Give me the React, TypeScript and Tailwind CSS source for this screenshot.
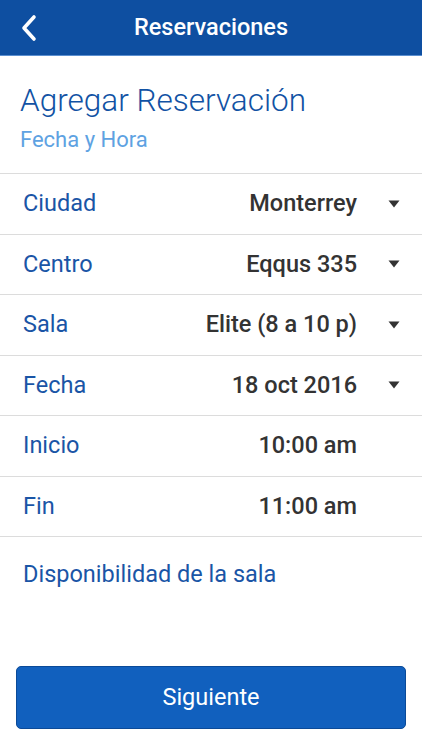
const rows = [
  { label: "Ciudad", value: "Monterrey", select: true },
  { label: "Centro", value: "Eqqus 335", select: true },
  { label: "Sala", value: "Elite (8 a 10 p)", select: true },
  { label: "Fecha", value: "18 oct 2016", select: true },
  { label: "Inicio", value: "10:00 am", select: false },
  { label: "Fin", value: "11:00 am", select: false },
];

function Caret() {
  return (
    <svg width="12" height="8" viewBox="0 0 12 8" className="fill-[#333333]">
      <path d="M0.5 0.5 L11.5 0.5 L6 7.5 Z" />
    </svg>
  );
}

export default function App() {
  return (
    <div className="flex h-[750px] w-[422px] flex-col bg-white font-['Roboto',sans-serif]">
      <header className="relative flex h-[56px] items-center justify-center border-b border-[#5b8fd0] bg-[#0e4fa1]">
        <button className="absolute left-[20px] top-[14px] text-white">
          <svg width="18" height="28" viewBox="0 0 18 28" fill="none">
            <path d="M14 3 L4 14 L14 25" stroke="white" strokeWidth="3.6" strokeLinecap="round" strokeLinejoin="round" />
          </svg>
        </button>
        <h1 className="text-[23.5px] font-medium text-white">Reservaciones</h1>
      </header>

      <div className="px-[20px] pt-[26px] pb-[19px]">
        <h2 className="text-[31.5px] font-light leading-[38px] text-[#1152a4]">Agregar Reservación</h2>
        <p className="mt-[6px] text-[22px] leading-[28px] text-[#5ea2e2]">Fecha y Hora</p>
      </div>

      <div>
        {rows.map((row) => (
          <div
            key={row.label}
            className="flex h-[60.5px] items-center border-t border-[#dcdcdc] pl-[23px] pr-[22px]"
          >
            <span className="flex-1 text-[23.5px] text-[#1a55a6]">{row.label}</span>
            <span className="text-[23.5px] font-medium text-[#333333]">{row.value}</span>
            <span className="ml-[31px] flex w-[12px] justify-center">{row.select ? <Caret /> : null}</span>
          </div>
        ))}
        <div className="border-t border-[#dcdcdc] px-[23px] pt-[20px]">
          <span className="text-[23.5px] text-[#1a55a6]">Disponibilidad de la sala</span>
        </div>
      </div>

      <div className="mt-auto px-[16px] pb-[21px]">
        <button className="h-[63px] w-full rounded-[5px] border border-[#0b4a98] bg-[#1160be] text-[23.5px] text-white">
          Siguiente
        </button>
      </div>
    </div>
  );
}
